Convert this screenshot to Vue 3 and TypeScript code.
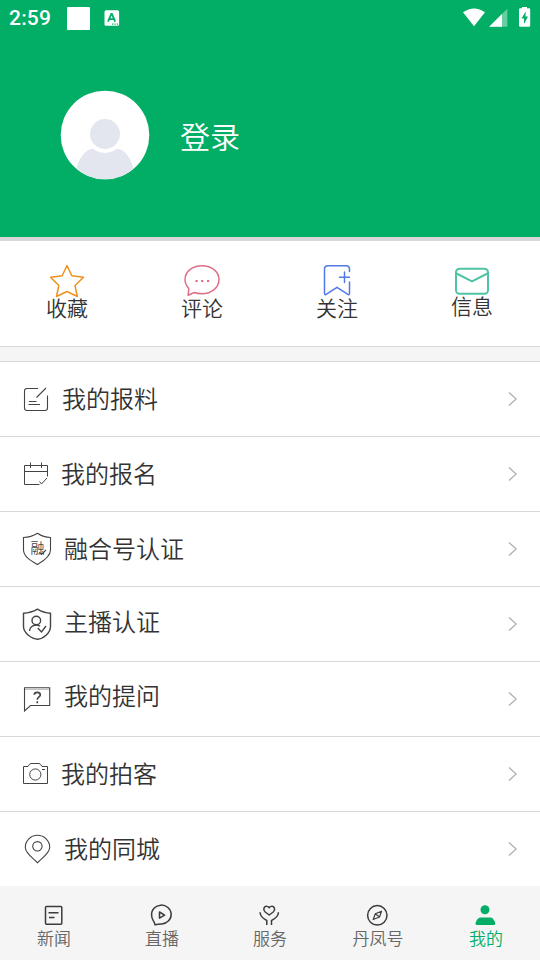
<script setup lang="ts">
interface MenuRow {
  id: string
  label: string
  gap: number
  lift: number
}

const rows: MenuRow[] = [
  { id: 'report', label: '我的报料', gap: 9, lift: 2 },
  { id: 'signup', label: '我的报名', gap: 8, lift: 2 },
  { id: 'media', label: '融合号认证', gap: 11, lift: 2 },
  { id: 'anchor', label: '主播认证', gap: 11, lift: 6 },
  { id: 'question', label: '我的提问', gap: 11, lift: 8 },
  { id: 'photo', label: '我的拍客', gap: 8, lift: 2 },
  { id: 'city', label: '我的同城', gap: 11, lift: 3 },
]

const actions = [
  { id: 'favorite', label: '收藏' },
  { id: 'comment', label: '评论' },
  { id: 'follow', label: '关注' },
  { id: 'message', label: '信息' },
]

const tabs = [
  { id: 'news', label: '新闻' },
  { id: 'live', label: '直播' },
  { id: 'service', label: '服务' },
  { id: 'danfeng', label: '丹凤号' },
  { id: 'mine', label: '我的' },
]
const activeTab = 'mine'
</script>

<template>
  <div class="screen">
    <header class="hero">
      <div class="status">
        <span class="clock">2:59</span>
        <span class="square"></span>
        <svg class="app-badge" viewBox="0 0 16 16">
          <rect x="0.5" y="0.3" width="14.6" height="15.4" rx="1.5" fill="#fff" />
          <path d="M4 11.6 7.3 3.8h.6l3.3 7.8M5.2 9.2h4.8" fill="none" stroke="#02ae66" stroke-width="1.8" />
          <path d="M8 14.1h1.2M10.4 14.1h1.2M12.8 14.1h1.2" stroke="#02ae66" stroke-width="1.3" />
        </svg>
        <svg class="signals" viewBox="0 0 70 22">
          <path d="M0 5.2Q11-2.4 22 5.2L11 19.2Z" fill="#fff" />
          <path d="M26.2 19.8 44.3 1.8V19.8Z" fill="#fff" opacity=".4" />
          <path d="M26.2 19.8 39 7V19.8Z" fill="#fff" />
          <path d="M59 1.2V0h5v1.2h2q1.2 0 1.2 1.2V18.6q0 1.2-1.2 1.2H57.2q-1.2 0-1.2-1.2V2.4q0-1.2 1.2-1.2Z" fill="#fff" />
          <path d="M62.7 4.5 58.5 11.500H61V17L65 9.500H62.500Z" fill="#02ae66" />
        </svg>
      </div>
      <div class="profile">
        <svg class="avatar" viewBox="0 0 90 90">
          <defs><clipPath id="face"><circle cx="45" cy="45" r="44.300" /></clipPath></defs>
          <circle cx="45" cy="45" r="44.300" fill="#fff" />
          <g clip-path="url(#face)">
            <path d="M15 84C18 69 25 58.500 34 58.500H56C65 58.500 72 69 75 84V90H15Z" fill="#e3e6ee" />
            <circle cx="45" cy="44" r="19" fill="#fff" />
            <circle cx="45" cy="44" r="15" fill="#e3e6ee" />
          </g>
        </svg>
        <span class="login">登录</span>
      </div>
    </header>

    <section class="actions">
      <div v-for="a in actions" :key="a.id" class="action" :class="a.id">
        <svg class="action-icon" viewBox="0 0 40 36" fill="none" stroke-width="1.500" stroke-linejoin="round" stroke-linecap="round">
          <path v-if="a.id === 'favorite'" stroke="#f0901e" d="M20 2.500 24.800 12.700 36.500 14.200 28 22.500 30.300 33.500 20 28.500 9.500 33.500 11.800 22.500 3.500 14.200 15.200 12.700Z" />
          <template v-else-if="a.id === 'comment'">
            <path stroke="#dc7086" d="M6.800 25.600C4.500 23 3 20 3 16.500 3 8.500 10.500 2.700 20 2.700S37 8.500 37 16.500 29.500 30.700 20 30.700C17 30.700 14.500 30.300 12.300 29.500L6.100 32.200Z" />
            <path stroke="#dc7086" stroke-width="2.200" stroke-linecap="butt" d="M13.500 18h2.200M19.100 18h2.200M25 18h2.200" />
          </template>
          <g v-else-if="a.id === 'follow'" stroke="#5079e5">
            <path d="M32.500 8.500V6Q32.500 2.700 29 2.700H11Q7.500 2.700 7.500 6V30Q7.500 32.500 9.500 31.200L20 24.300 30.500 31.200Q32.500 32.500 32.500 30V19" />
            <path d="M22.500 14.200H32.500M27.500 9V19.500" />
          </g>
          <g v-else stroke="#4fc3a5" stroke-width="2">
            <rect x="4" y="5.700" width="32" height="25" rx="3.500" />
            <path d="M4.500 10.500 20 18.300 35.500 10.500" />
          </g>
        </svg>
        <span>{{ a.label }}</span>
      </div>
    </section>

    <div class="spacer"></div>

    <main class="menu">
      <div v-for="r in rows" :key="r.id" class="row">
        <svg class="row-icon" viewBox="0 0 32 36" fill="none" stroke="#444" stroke-width="1.100">
          <template v-if="r.id === 'report'">
            <path d="M17 7.500H6Q3.500 7.500 3.500 10V27Q3.500 29.500 6 29.500H24Q26.500 29.500 26.500 27V14.500M15.500 16.500 25 7" />
            <path d="M8 20.500H15.500M7.500 23.500H19" />
          </template>
          <path v-else-if="r.id === 'signup'" stroke-width="1" d="M18.500 28.500H3.500V9.500H26.500V20.500M3.500 15.500H26.500M9.500 6.500V12M20.500 6.500V12M18.500 25.500 20.500 28 26 22" />
          <template v-else-if="r.id === 'media'">
            <path d="M16.500 2.300Q22.500 6.500 29.500 6.500V19C29.500 25.500 23 29.800 16.500 33.500 10 29.800 2.500 25.500 2.500 19V6.500Q10 6.500 16.500 2.300Z" />
            <text class="seal" x="9.500" y="21.700">融</text>
            <path d="M18.300 21 20.500 23.500 25 19" />
          </template>
          <g v-else-if="r.id === 'anchor'" stroke-width="1.400">
            <path d="M16.500 3.200Q22.500 7 29.500 7.300V20.500C29.500 27 22 33.200 16.500 33.200S2.500 27 2.500 20.500V7.300Q10 7 16.500 3.200Z" />
            <circle cx="15.300" cy="14.500" r="4.300" />
            <path d="M8.500 25C8.500 21.500 11.500 19 15.300 19Q17.500 19 19 20.300M16.800 22 20.500 26 25 20" />
          </g>
          <template v-else-if="r.id === 'question'">
            <path d="M3.500 6.800H28.700V24.500H9.500L3.500 30Z" />
            <path stroke="#aaa" stroke-width=".8" d="M4 8.400H28" />
            <path stroke-width="1.700" d="M13.300 13.700Q13.300 11.300 16.300 11.300 19.300 11.300 19.300 14C19.300 16 16.300 16 16.300 18.800M16.300 20.200V22.200" />
          </template>
          <g v-else-if="r.id === 'photo'" stroke-width="1">
            <path d="M2.500 10.500H7Q8.500 7.500 10 7.500H18Q19.500 7.500 21 10.500H26.500V27.500H2.500Z" />
            <circle cx="14.300" cy="18.500" r="5.600" /><path d="M21 13.500H24" />
          </g>
          <template v-else>
            <path d="M16.500 31.800C12 27 4.300 22.500 4.300 16.300A12.200 12 0 0 1 28.700 16.300C28.700 22.500 21 27 16.500 31.800Z" />
            <circle cx="16.400" cy="15.300" r="4.700" />
          </template>
        </svg>
        <span class="label" :style="{ marginLeft: r.gap + 'px', paddingBottom: r.lift + 'px' }">{{ r.label }}</span>
        <svg class="chevron" viewBox="0 0 10 16"><path d="M1 1.500 8.200 8 1 14.500" fill="none" stroke="#aaa" stroke-width="1.100" /></svg>
      </div>
    </main>

    <nav class="tabs">
      <div v-for="t in tabs" :key="t.id" class="tab" :class="{ active: t.id === activeTab }">
        <svg class="tab-icon" viewBox="0 0 24 24" fill="none" stroke="#3c3c3c" stroke-width="1.500" stroke-linejoin="round">
          <template v-if="t.id === 'news'">
            <rect x="3.500" y="3.500" width="16.300" height="17.800" rx="1" /><path d="M6.500 9.700H16.500M7 14.500H12.500" />
          </template>
          <path v-else-if="t.id === 'live'" d="M5 21.800C4.500 18.500 1.600 17 1.600 12.200A9.800 9.400 0 1 1 11.800 20.900Q8 21.100 5 21.800ZM9.500 9 14.600 12.200 9.500 15.200Z" />
          <template v-else-if="t.id === 'service'">
            <path d="M11.200 12 7.200 9C4.200 6 6.500 2.800 9 3.200Q10.500 3.400 11.200 4.800 11.900 3.400 13.400 3.200C15.900 2.800 18.200 6 15.200 9ZM2 9.300Q2.500 14.500 8.800 17.500V22M20.500 9.300Q20 14.500 13.500 17.500V22" />
          </template>
          <template v-else-if="t.id === 'danfeng'">
            <circle cx="11.300" cy="12.300" r="9.700" />
            <path stroke-width="1.200" d="M15.500 8.300 13.500 14 7.200 16.500 9.300 10.700ZM9.300 10.700 13.500 14" />
          </template>
          <g v-else fill="#02ae66" stroke="none">
            <circle cx="11" cy="6.700" r="4.500" />
            <path d="M6.500 14.500H16.500C19.500 14.500 21.300 19.500 21.300 20.500Q21.300 22 19.800 22H3.200Q1.500 22 1.500 20.500C1.700 19 3.500 14.500 6.500 14.500Z" />
          </g>
        </svg>
        <span>{{ t.label }}</span>
      </div>
    </nav>
  </div>
</template>

<style>
body { margin: 0; background: #fff; }
</style>

<style scoped>
.screen {
  width: 540px;
  height: 960px;
  display: flex;
  flex-direction: column;
  overflow: hidden;
  background: #fff;
  color: #333;
  font-family: "Noto Sans CJK SC", sans-serif;
  font-weight: 350;
}
svg { display: block; flex: none; }
.hero {
  box-sizing: border-box;
  height: 241px;
  flex: none;
  background: #02ae66;
  border-bottom: 4px solid #d8d8d8;
  color: #fff;
}
.status {
  height: 36px;
  display: flex;
  align-items: center;
  padding: 0 9px;
}
.clock {
  width: 58px;
  font: 500 21px/38px Roboto, sans-serif;
  letter-spacing: 0.2px;
}
.square { width: 23px; height: 23px; border-radius: 1px; background: #fff; }
.app-badge { width: 16px; height: 16px; margin-left: 14px; }
.signals { width: 70px; height: 22px; margin-left: auto; margin-right: -2px; }
.profile {
  display: flex;
  align-items: center;
  gap: 30px;
  padding: 54px 0 0 60px;
}
.avatar { width: 90px; height: 90px; }
.login { font-size: 30px; line-height: 40px; padding-bottom: 1px; }
.actions {
  box-sizing: border-box;
  height: 106px;
  flex: none;
  display: grid;
  grid-template-columns: repeat(4, 1fr);
  padding-top: 22px;
  border-bottom: 1px solid #d8d8d8;
}
.action {
  display: flex;
  flex-direction: column;
  align-items: center;
  padding-right: 1px;
  font-size: 21px;
  line-height: 24px;
}
.action-icon { width: 40px; height: 36px; margin-bottom: -4px; }
.message .action-icon { margin-bottom: -6px; }
.spacer { height: 14px; flex: none; background: #f5f5f5; border-bottom: 1px solid #d8d8d8; }
.menu { flex: 1; }
.row {
  box-sizing: border-box;
  height: 75px;
  display: flex;
  align-items: center;
  padding: 0 22px 0 21px;
  border-bottom: 1px solid #d8d8d8;
}
.row:last-child { height: 74px; border-bottom: 0; }
.row-icon { width: 32px; height: 36px; }
.seal { font-size: 14px; fill: #444; stroke: none; }
.label { font-size: 24px; line-height: 36px; }
.chevron { width: 10px; height: 16px; margin-left: auto; }
.tabs {
  height: 74px;
  flex: none;
  display: grid;
  grid-template-columns: repeat(5, 1fr);
  background: #f5f5f5;
  color: #666;
}
.tab {
  display: flex;
  flex-direction: column;
  align-items: center;
  padding-top: 17px;
  font-size: 17px;
  line-height: 22px;
}
.tab-icon { width: 24px; height: 24px; }
.tab.active { color: #02ae66; }
</style>
